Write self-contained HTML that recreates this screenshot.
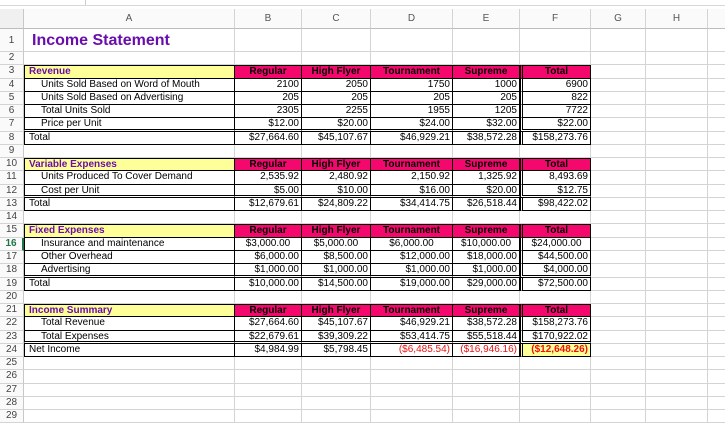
<!DOCTYPE html>
<html><head><meta charset="utf-8"><style>
body{margin:0;width:725px;height:421px;overflow:hidden;background:#fff;font-family:"Liberation Sans",Arial,sans-serif;position:relative}
.tb{position:absolute;left:0;top:0;width:725px;height:9px;background:#fff;border-bottom:1px solid #c8c8c8}
.tb:after{content:"";position:absolute;left:0;right:0;top:5px;height:1px;background:#d8d8d8}
.tb i{position:absolute;left:85px;top:0;width:1px;height:6px;background:#ccc}
.sheet{position:absolute;left:0;top:9px}
.r{display:flex;height:13.27px}
.c{flex:none;box-sizing:border-box;border-right:1px solid #d4d4d4;border-bottom:1px solid #d4d4d4;font-size:10px;line-height:12px;white-space:nowrap;overflow:hidden;padding:0 2px;color:#000;text-align:right}
.c:nth-child(1){width:24px;text-align:center;color:#444;padding:0;border-right:1px solid #c8c8c8;background:#fafafa}
.c:nth-child(2){width:211px;text-align:left}
.c:nth-child(3){width:67px}
.c:nth-child(4){width:69px}
.c:nth-child(5){width:82px}
.c:nth-child(6){width:67px}
.c:nth-child(7){width:71px}
.c:nth-child(8){width:55px}
.c:nth-child(9){width:62px}
.c:nth-child(10){width:40px}
.hd{height:20px}
.hd .c{line-height:19px;text-align:center;color:#555;background:#fafafa;border-bottom:1px solid #bdbdbd;font-size:10px}
.hd .c:nth-child(1){background:#f0f0f0}
.t1{height:23px}
.t1 .c{line-height:24px}
.bx .c:nth-child(n+2):nth-child(-n+7){border-bottom:1px solid #000;border-right:1px solid #000}
.bx .c:nth-child(2){border-left:1px solid #000}
.bx .c:nth-child(6){border-right:0}
.bx .c:nth-child(7){border-left:3px double #000}
.top .c:nth-child(n+2):nth-child(-n+7){border-top:1px solid #000;line-height:11px}
.dbl .c:nth-child(n+2):nth-child(-n+7){border-bottom:3px double #000}
.h .c:nth-child(2){background:#ffff99;color:#6a0dad;font-weight:bold;padding-left:4px}
.h .c:nth-child(n+3):nth-child(-n+7){background:#f5086e;font-weight:bold;text-align:center}
.in{padding-left:16px!important}
.lt{padding-left:4px!important}
.red{color:#f01010}
.sel .c:nth-child(1){color:#217346;font-weight:bold;border-right:2px solid #217346}
.sel .c:nth-child(n+3){text-align:center}
.title{color:#6a0dad;font-weight:bold;font-size:16px!important;padding-left:8px!important}
</style></head><body>
<div class="tb"><i></i></div>
<div class="sheet">
<div class="r hd"><div class="c"></div><div class="c">A</div><div class="c">B</div><div class="c">C</div><div class="c">D</div><div class="c">E</div><div class="c">F</div><div class="c">G</div><div class="c">H</div><div class="c"></div></div>
<div class="r t1"><div class="c">1</div><div class="c title">Income Statement</div><div class="c"></div><div class="c"></div><div class="c"></div><div class="c"></div><div class="c"></div><div class="c"></div><div class="c"></div><div class="c"></div></div>
<div class="r"><div class="c">2</div><div class="c"></div><div class="c"></div><div class="c"></div><div class="c"></div><div class="c"></div><div class="c"></div><div class="c"></div><div class="c"></div><div class="c"></div></div>

<div class="r bx top h"><div class="c">3</div><div class="c">Revenue</div><div class="c">Regular</div><div class="c">High Flyer</div><div class="c">Tournament</div><div class="c">Supreme</div><div class="c">Total</div><div class="c"></div><div class="c"></div><div class="c"></div></div>
<div class="r bx"><div class="c">4</div><div class="c in">Units Sold Based on Word of Mouth</div><div class="c">2100</div><div class="c">2050</div><div class="c">1750</div><div class="c">1000</div><div class="c">6900</div><div class="c"></div><div class="c"></div><div class="c"></div></div>
<div class="r bx"><div class="c">5</div><div class="c in">Units Sold Based on Advertising</div><div class="c">205</div><div class="c">205</div><div class="c">205</div><div class="c">205</div><div class="c">822</div><div class="c"></div><div class="c"></div><div class="c"></div></div>
<div class="r bx"><div class="c">6</div><div class="c in">Total Units Sold</div><div class="c">2305</div><div class="c">2255</div><div class="c">1955</div><div class="c">1205</div><div class="c">7722</div><div class="c"></div><div class="c"></div><div class="c"></div></div>
<div class="r bx dbl"><div class="c">7</div><div class="c in">Price per Unit</div><div class="c">$12.00</div><div class="c">$20.00</div><div class="c">$24.00</div><div class="c">$32.00</div><div class="c">$22.00</div><div class="c"></div><div class="c"></div><div class="c"></div></div>
<div class="r bx"><div class="c">8</div><div class="c lt">Total</div><div class="c">$27,664.60</div><div class="c">$45,107.67</div><div class="c">$46,929.21</div><div class="c">$38,572.28</div><div class="c">$158,273.76</div><div class="c"></div><div class="c"></div><div class="c"></div></div>
<div class="r"><div class="c">9</div><div class="c"></div><div class="c"></div><div class="c"></div><div class="c"></div><div class="c"></div><div class="c"></div><div class="c"></div><div class="c"></div><div class="c"></div></div>

<div class="r bx top h"><div class="c">10</div><div class="c">Variable Expenses</div><div class="c">Regular</div><div class="c">High Flyer</div><div class="c">Tournament</div><div class="c">Supreme</div><div class="c">Total</div><div class="c"></div><div class="c"></div><div class="c"></div></div>
<div class="r bx"><div class="c">11</div><div class="c in">Units Produced To Cover Demand</div><div class="c">2,535.92</div><div class="c">2,480.92</div><div class="c">2,150.92</div><div class="c">1,325.92</div><div class="c">8,493.69</div><div class="c"></div><div class="c"></div><div class="c"></div></div>
<div class="r bx dbl"><div class="c">12</div><div class="c in">Cost per Unit</div><div class="c">$5.00</div><div class="c">$10.00</div><div class="c">$16.00</div><div class="c">$20.00</div><div class="c">$12.75</div><div class="c"></div><div class="c"></div><div class="c"></div></div>
<div class="r bx"><div class="c">13</div><div class="c lt">Total</div><div class="c">$12,679.61</div><div class="c">$24,809.22</div><div class="c">$34,414.75</div><div class="c">$26,518.44</div><div class="c">$98,422.02</div><div class="c"></div><div class="c"></div><div class="c"></div></div>
<div class="r"><div class="c">14</div><div class="c"></div><div class="c"></div><div class="c"></div><div class="c"></div><div class="c"></div><div class="c"></div><div class="c"></div><div class="c"></div><div class="c"></div></div>

<div class="r bx top h"><div class="c">15</div><div class="c">Fixed Expenses</div><div class="c">Regular</div><div class="c">High Flyer</div><div class="c">Tournament</div><div class="c">Supreme</div><div class="c">Total</div><div class="c"></div><div class="c"></div><div class="c"></div></div>
<div class="r bx sel"><div class="c">16</div><div class="c in">Insurance and maintenance</div><div class="c">$3,000.00</div><div class="c">$5,000.00</div><div class="c">$6,000.00</div><div class="c">$10,000.00</div><div class="c">$24,000.00</div><div class="c"></div><div class="c"></div><div class="c"></div></div>
<div class="r bx"><div class="c">17</div><div class="c in">Other Overhead</div><div class="c">$6,000.00</div><div class="c">$8,500.00</div><div class="c">$12,000.00</div><div class="c">$18,000.00</div><div class="c">$44,500.00</div><div class="c"></div><div class="c"></div><div class="c"></div></div>
<div class="r bx dbl"><div class="c">18</div><div class="c in">Advertising</div><div class="c">$1,000.00</div><div class="c">$1,000.00</div><div class="c">$1,000.00</div><div class="c">$1,000.00</div><div class="c">$4,000.00</div><div class="c"></div><div class="c"></div><div class="c"></div></div>
<div class="r bx"><div class="c">19</div><div class="c lt">Total</div><div class="c">$10,000.00</div><div class="c">$14,500.00</div><div class="c">$19,000.00</div><div class="c">$29,000.00</div><div class="c">$72,500.00</div><div class="c"></div><div class="c"></div><div class="c"></div></div>
<div class="r"><div class="c">20</div><div class="c"></div><div class="c"></div><div class="c"></div><div class="c"></div><div class="c"></div><div class="c"></div><div class="c"></div><div class="c"></div><div class="c"></div></div>

<div class="r bx top h"><div class="c">21</div><div class="c">Income Summary</div><div class="c">Regular</div><div class="c">High Flyer</div><div class="c">Tournament</div><div class="c">Supreme</div><div class="c">Total</div><div class="c"></div><div class="c"></div><div class="c"></div></div>
<div class="r bx"><div class="c">22</div><div class="c in">Total Revenue</div><div class="c">$27,664.60</div><div class="c">$45,107.67</div><div class="c">$46,929.21</div><div class="c">$38,572.28</div><div class="c">$158,273.76</div><div class="c"></div><div class="c"></div><div class="c"></div></div>
<div class="r bx dbl"><div class="c">23</div><div class="c in">Total Expenses</div><div class="c">$22,679.61</div><div class="c">$39,309.22</div><div class="c">$53,414.75</div><div class="c">$55,518.44</div><div class="c">$170,922.02</div><div class="c"></div><div class="c"></div><div class="c"></div></div>
<div class="r bx"><div class="c">24</div><div class="c lt">Net Income</div><div class="c">$4,984.99</div><div class="c">$5,798.45</div><div class="c red">($6,485.54)</div><div class="c red">($16,946.16)</div><div class="c red" style="background:#ffff99;font-weight:bold">($12,648.26)</div><div class="c"></div><div class="c"></div><div class="c"></div></div>
<div class="r"><div class="c">25</div><div class="c"></div><div class="c"></div><div class="c"></div><div class="c"></div><div class="c"></div><div class="c"></div><div class="c"></div><div class="c"></div><div class="c"></div></div>
<div class="r"><div class="c">26</div><div class="c"></div><div class="c"></div><div class="c"></div><div class="c"></div><div class="c"></div><div class="c"></div><div class="c"></div><div class="c"></div><div class="c"></div></div>
<div class="r"><div class="c">27</div><div class="c"></div><div class="c"></div><div class="c"></div><div class="c"></div><div class="c"></div><div class="c"></div><div class="c"></div><div class="c"></div><div class="c"></div></div>
<div class="r"><div class="c">28</div><div class="c"></div><div class="c"></div><div class="c"></div><div class="c"></div><div class="c"></div><div class="c"></div><div class="c"></div><div class="c"></div><div class="c"></div></div>
<div class="r"><div class="c">29</div><div class="c"></div><div class="c"></div><div class="c"></div><div class="c"></div><div class="c"></div><div class="c"></div><div class="c"></div><div class="c"></div><div class="c"></div></div>
</div>
</body></html>
